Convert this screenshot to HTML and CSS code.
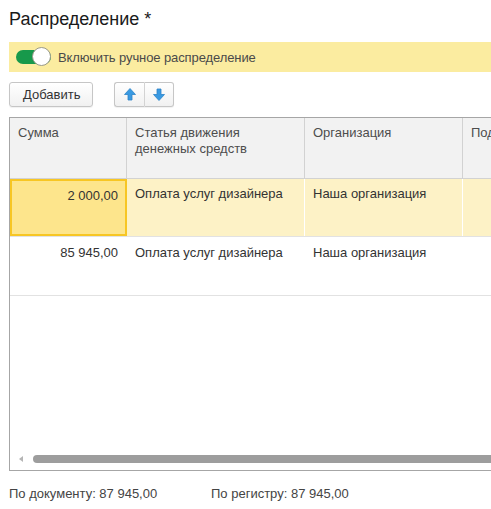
FILE: index.html
```html
<!DOCTYPE html>
<html lang="ru">
<head>
<meta charset="utf-8">
<link rel="stylesheet" href="styles.css">
</head>
<body>
<div class="page">
  <h1 class="title">Распределение *</h1>
  <div class="notice">
    <span class="toggle"><span class="knob"></span></span>
    <span class="notice-text">Включить ручное распределение</span>
  </div>
  <div class="toolbar">
    <button class="btn">Добавить</button>
    <div class="btn-group">
      <button class="btn icon-btn" aria-label="Вверх">
        <svg width="12" height="13" viewBox="0 0 12 13"><path d="M6 0.5 L11.5 6.5 L8 6.5 L8 12 L4 12 L4 6.5 L0.5 6.5 Z" fill="#3a9ae2" stroke="#2d84c8" stroke-width="0.8" stroke-linejoin="round"/></svg>
      </button>
      <button class="btn icon-btn" aria-label="Вниз">
        <svg width="12" height="13" viewBox="0 0 12 13"><path d="M6 12.5 L11.5 6.5 L8 6.5 L8 1 L4 1 L4 6.5 L0.5 6.5 Z" fill="#3a9ae2" stroke="#2d84c8" stroke-width="0.8" stroke-linejoin="round"/></svg>
      </button>
    </div>
  </div>
  <div class="table">
    <div class="row head">
      <div class="cell c1">Сумма</div>
      <div class="cell c2">Статья движения<br>денежных средств</div>
      <div class="cell c3">Организация</div>
      <div class="cell c4">Подразделение</div>
    </div>
    <div class="row current">
      <div class="cell c1 num selected">2 000,00</div>
      <div class="cell c2">Оплата услуг дизайнера</div>
      <div class="cell c3">Наша организация</div>
      <div class="cell c4"></div>
    </div>
    <div class="row">
      <div class="cell c1 num">85 945,00</div>
      <div class="cell c2">Оплата услуг дизайнера</div>
      <div class="cell c3">Наша организация</div>
      <div class="cell c4"></div>
    </div>
    <div class="spacer"></div>
    <div class="hscroll">
      <span class="arrow-left"></span>
      <span class="thumb"></span>
    </div>
  </div>
  <div class="footer">
    <span class="total">По документу: 87 945,00</span>
    <span class="total">По регистру: 87 945,00</span>
  </div>
</div>
</body>
</html>
```

FILE: styles.css
```css
* { box-sizing: border-box; }
html, body {
  margin: 0;
  padding: 0;
  background: #fff;
  overflow: hidden;
}
body {
  font-family: "Liberation Sans", Arial, sans-serif;
  font-size: 13px;
  color: #333;
}
.page {
  width: 491px;
  height: 509px;
  padding-left: 9px;
  overflow: hidden;
}
.title {
  margin: 0;
  padding-top: 8px;
  height: 42px;
  font-size: 18px;
  font-weight: normal;
  line-height: 22px;
  color: #1a1a1a;
}
.notice {
  width: 600px;
  height: 30px;
  background: #fbeca0;
  display: flex;
  align-items: center;
  padding-left: 7px;
  gap: 7px;
}
.toggle {
  position: relative;
  width: 35px;
  height: 14px;
  background: #17994b;
  border-radius: 7px;
  display: block;
}
.knob {
  position: absolute;
  right: 0;
  top: -3px;
  width: 19px;
  height: 19px;
  border-radius: 50%;
  background: #fff;
  border: 1px solid #9a9a8a;
}
.notice-text {
  color: #4a4a4a;
  font-size: 13px;
  letter-spacing: -0.1px;
}
.toolbar {
  display: flex;
  gap: 21px;
  margin-top: 10px;
  height: 25px;
}
.btn {
  font-family: "Liberation Sans", Arial, sans-serif;
  font-size: 13px;
  color: #333;
  height: 25px;
  border: 1px solid #c6c6c6;
  border-radius: 3px;
  background: linear-gradient(#ffffff, #f1f1f1);
  padding: 0 13px;
  width: 84px;
  box-shadow: 0 1px 1px rgba(0,0,0,0.06);
}
.btn-group {
  display: flex;
}
.btn-group .icon-btn {
  width: 30px;
  padding: 0;
  display: flex;
  align-items: center;
  justify-content: center;
}
.btn-group .icon-btn:first-child {
  border-radius: 3px 0 0 3px;
  border-right: 1px solid #d4d4d4;
  width: 31px;
}
.btn-group .icon-btn:last-child {
  border-left: none;
  border-radius: 0 3px 3px 0;
  width: 29px;
}
.table {
  margin-top: 10px;
  width: 620px;
  height: 354px;
  border: 1px solid #a6a6a6;
  display: flex;
  flex-direction: column;
}
.row {
  display: flex;
  height: 58px;
  border-bottom: 1px solid #e2e2e2;
}
.row.head {
  height: 61px;
  background: #f2f2f2;
  border-bottom: 1px solid #d2d2d2;
  color: #4d4d4d;
}
.row.current {
  background: #fdf2c6;
}
.row + .row:not(.current) {
  height: 59px;
}
.cell {
  padding: 7px 8px;
  line-height: 16px;
  border-right: 1px solid #ffffff;
  white-space: nowrap;
  overflow: hidden;
}
.row.current .cell { padding-top: 7px; }
.row:not(.head):not(.current) .cell { padding-top: 8px; }
.head .cell { border-right-color: #d2d2d2; }
.c1 { width: 117px; }
.c2 { width: 178px; }
.c3 { width: 158px; }
.c4 { flex: 1; }
.num { text-align: right; }
.cell.selected {
  background: #fde58c;
  border: 2px solid #f7c624;
  padding: 5px 7px 5px 6px;
}
.spacer { flex: 1; }
.hscroll {
  height: 16px;
  display: flex;
  align-items: center;
  padding-left: 9px;
  gap: 10px;
  margin-bottom: 3px;
}
.arrow-left {
  width: 0;
  height: 0;
  border-top: 3px solid transparent;
  border-bottom: 3px solid transparent;
  border-right: 4px solid #b5b5b5;
}
.thumb {
  flex: 1;
  height: 8px;
  background: #9d9d9d;
  border-radius: 4px;
}
.footer {
  display: flex;
  margin-top: 15px;
  font-size: 13px;
  color: #444;
  line-height: 16px;
}
.total:first-child { width: 202px; }
```
